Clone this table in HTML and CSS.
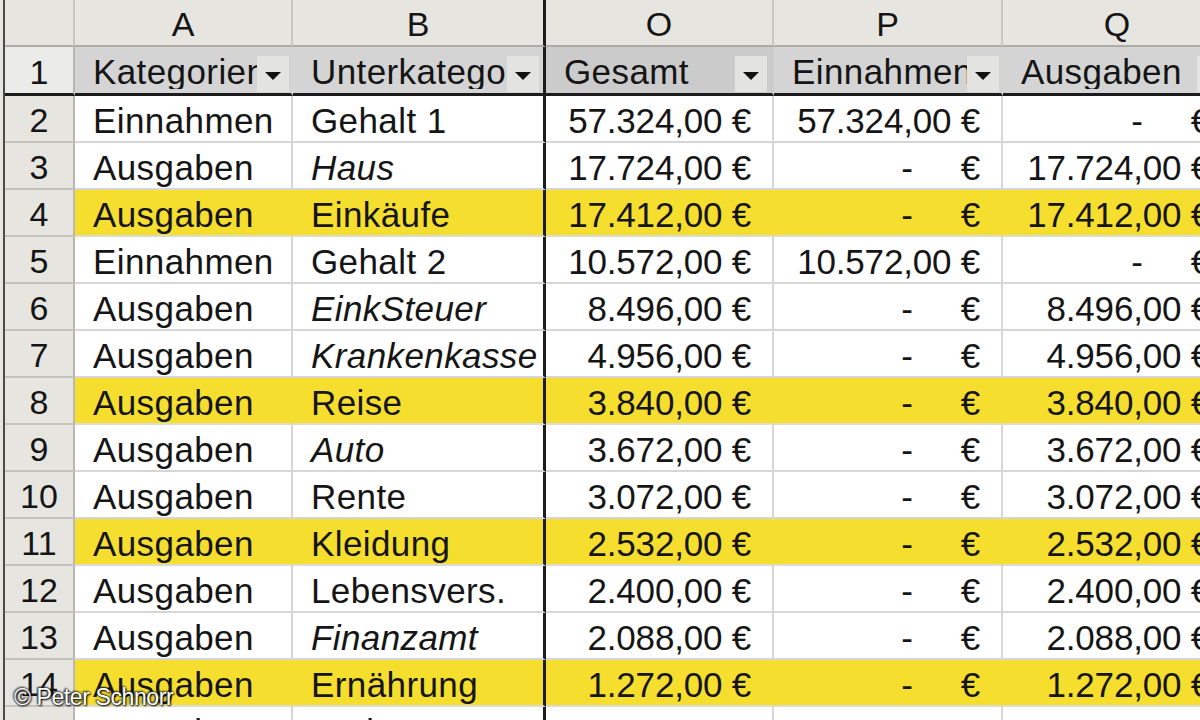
FILE: index.html
```html
<!DOCTYPE html>
<html lang="de">
<head>
<meta charset="utf-8">
<title>Haushaltsbuch</title>
<link rel="stylesheet" href="styles.css">
</head>
<body>
<div class="sheet">
  <div class="grid">
    <div class="c corner"></div>
    <div class="c colhead">A</div>
    <div class="c colhead colB">B</div>
    <div class="c colhead">O</div>
    <div class="c colhead">P</div>
    <div class="c colhead">Q</div>

    <div class="c rowhead r1">1</div>
    <div class="c filter"><span class="ft">Kategorien</span><span class="btn"></span></div>
    <div class="c filter colB"><span class="ft">Unterkategorie</span><span class="btn"></span></div>
    <div class="c filter dark"><span class="ft">Gesamt</span><span class="btn"></span></div>
    <div class="c filter"><span class="ft">Einnahmen</span><span class="btn"></span></div>
    <div class="c filter"><span class="ft">Ausgaben</span><span class="btn"></span></div>

    <div class="c rowhead">2</div>
    <div class="c txt">Einnahmen</div>
    <div class="c txt colB">Gehalt 1</div>
    <div class="c num">57.324,00 €</div>
    <div class="c num">57.324,00 €</div>
    <div class="c num"><span class="dash">-</span><span>€</span></div>

    <div class="c rowhead">3</div>
    <div class="c txt">Ausgaben</div>
    <div class="c txt colB it">Haus</div>
    <div class="c num">17.724,00 €</div>
    <div class="c num"><span class="dash">-</span><span>€</span></div>
    <div class="c num">17.724,00 €</div>

    <div class="c rowhead">4</div>
    <div class="c txt hl">Ausgaben</div>
    <div class="c txt colB hl">Einkäufe</div>
    <div class="c num hl">17.412,00 €</div>
    <div class="c num hl"><span class="dash">-</span><span>€</span></div>
    <div class="c num hl">17.412,00 €</div>

    <div class="c rowhead">5</div>
    <div class="c txt">Einnahmen</div>
    <div class="c txt colB">Gehalt 2</div>
    <div class="c num">10.572,00 €</div>
    <div class="c num">10.572,00 €</div>
    <div class="c num"><span class="dash">-</span><span>€</span></div>

    <div class="c rowhead">6</div>
    <div class="c txt">Ausgaben</div>
    <div class="c txt colB it">EinkSteuer</div>
    <div class="c num">8.496,00 €</div>
    <div class="c num"><span class="dash">-</span><span>€</span></div>
    <div class="c num">8.496,00 €</div>

    <div class="c rowhead">7</div>
    <div class="c txt">Ausgaben</div>
    <div class="c txt colB it">Krankenkasse</div>
    <div class="c num">4.956,00 €</div>
    <div class="c num"><span class="dash">-</span><span>€</span></div>
    <div class="c num">4.956,00 €</div>

    <div class="c rowhead">8</div>
    <div class="c txt hl">Ausgaben</div>
    <div class="c txt colB hl">Reise</div>
    <div class="c num hl">3.840,00 €</div>
    <div class="c num hl"><span class="dash">-</span><span>€</span></div>
    <div class="c num hl">3.840,00 €</div>

    <div class="c rowhead">9</div>
    <div class="c txt">Ausgaben</div>
    <div class="c txt colB it">Auto</div>
    <div class="c num">3.672,00 €</div>
    <div class="c num"><span class="dash">-</span><span>€</span></div>
    <div class="c num">3.672,00 €</div>

    <div class="c rowhead">10</div>
    <div class="c txt">Ausgaben</div>
    <div class="c txt colB">Rente</div>
    <div class="c num">3.072,00 €</div>
    <div class="c num"><span class="dash">-</span><span>€</span></div>
    <div class="c num">3.072,00 €</div>

    <div class="c rowhead">11</div>
    <div class="c txt hl">Ausgaben</div>
    <div class="c txt colB hl">Kleidung</div>
    <div class="c num hl">2.532,00 €</div>
    <div class="c num hl"><span class="dash">-</span><span>€</span></div>
    <div class="c num hl">2.532,00 €</div>

    <div class="c rowhead">12</div>
    <div class="c txt">Ausgaben</div>
    <div class="c txt colB">Lebensvers.</div>
    <div class="c num">2.400,00 €</div>
    <div class="c num"><span class="dash">-</span><span>€</span></div>
    <div class="c num">2.400,00 €</div>

    <div class="c rowhead">13</div>
    <div class="c txt">Ausgaben</div>
    <div class="c txt colB it">Finanzamt</div>
    <div class="c num">2.088,00 €</div>
    <div class="c num"><span class="dash">-</span><span>€</span></div>
    <div class="c num">2.088,00 €</div>

    <div class="c rowhead">14</div>
    <div class="c txt hl">Ausgaben</div>
    <div class="c txt colB hl">Ernährung</div>
    <div class="c num hl">1.272,00 €</div>
    <div class="c num hl"><span class="dash">-</span><span>€</span></div>
    <div class="c num hl">1.272,00 €</div>

    <div class="c rowhead">15</div>
    <div class="c txt">Ausgaben</div>
    <div class="c txt colB">Andere</div>
    <div class="c num">1.000,00 €</div>
    <div class="c num"><span class="dash">-</span><span>€</span></div>
    <div class="c num">1.000,00 €</div>
  </div>
</div>
<div class="credit">© Peter Schnorr</div>
</body>
</html>
```

FILE: styles.css
```css
html, body {
  margin: 0;
  padding: 0;
  width: 1200px;
  height: 720px;
  overflow: hidden;
  background: #e7e5e0;
  font-family: "Liberation Sans", Arial, sans-serif;
  color: #151515;
}

.sheet {
  margin-left: 3px;
  border-left: 2px solid #4a4a4a;
  height: 720px;
  position: relative;
}

.grid {
  display: grid;
  grid-template-columns: 70px 218px 253px 228px 229px 230px;
  grid-template-rows: 47px 49px repeat(14, 47px);
  width: 1228px;
}

.c {
  box-sizing: border-box;
  border-right: 2px solid #d6d6d6;
  border-bottom: 2px solid #d6d6d6;
  background: #ffffff;
  font-size: 35px;
  line-height: 1;
  display: flex;
  align-items: center;
  white-space: nowrap;
  overflow: hidden;
  position: relative;
  padding-top: 3px;
  letter-spacing: 0.4px;
}

.corner,
.colhead {
  background: #e7e5e0;
  border-right: 2px solid #c9c7c1;
  border-bottom: 2px solid #aeaca6;
  justify-content: center;
  font-size: 34px;
  padding-top: 2px;
  letter-spacing: 0;
}

.rowhead {
  background: #e7e5e0;
  border-right: 2px solid #b9b7b1;
  border-bottom: 2px solid #c4c2bc;
  justify-content: center;
  font-size: 34px;
  letter-spacing: 0;
}

.rowhead.r1 {
  background: #ebebea;
  border-bottom: 3px solid #1c1c1c;
}

.txt {
  padding-left: 18px;
}

.num {
  justify-content: flex-end;
  padding-right: 21px;
  letter-spacing: -0.2px;
}

.num .dash {
  margin-right: 48px;
}

.it {
  font-style: italic;
}

.colB {
  border-right: 3px solid #1c1c1c;
}

.colhead.colB {
  border-right: 3px solid #1c1c1c;
}

.hl {
  background: #f5de2e;
  border-right-color: #f5de2e;
  border-bottom-color: #dcdcd0;
}

.hl.colB {
  border-right-color: #1c1c1c;
}

.filter {
  background: #d4d4d4;
  border-bottom: 3px solid #1c1c1c;
  border-right-color: #d4d4d4;
  padding-left: 18px;
  padding-right: 2px;
  padding-top: 0;
  align-items: center;
}

.filter.dark {
  background: #cbcbcb;
  border-right-color: #cbcbcb;
  padding-right: 5px;
}

.filter::after {
  content: "";
  position: absolute;
  right: -2px;
  top: 9px;
  bottom: 0;
  width: 2px;
  background: #1c1c1c;
}

.filter.colB {
  border-right: 3px solid #1c1c1c;
  padding-right: 4px;
}

.filter.colB::after {
  display: none;
}

.ft {
  flex: 1;
  overflow: hidden;
  white-space: nowrap;
  padding-top: 3px;
}

.btn {
  flex: none;
  width: 32px;
  height: 36px;
  align-self: flex-end;
  margin-bottom: 1px;
  background: #e3e3e1;
  display: flex;
  align-items: center;
  justify-content: center;
}

.btn::before {
  content: "";
  border-left: 8px solid transparent;
  border-right: 8px solid transparent;
  border-top: 8px solid #111;
  margin-top: 3px;
}

.credit {
  position: absolute;
  left: 14px;
  top: 684px;
  font-family: "Liberation Sans", Arial, sans-serif;
  font-size: 23px;
  color: #ffffff;
  text-shadow: 0 0 2px #000, 1px 1px 2px #000, -1px -1px 2px #333;
  letter-spacing: -0.4px;
}
```
